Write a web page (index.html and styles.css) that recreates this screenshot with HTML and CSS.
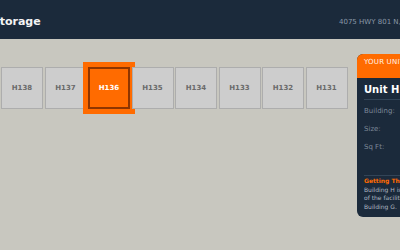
FILE: index.html
```html
<!DOCTYPE html>
<html lang="en">

<head>
    <meta charset="UTF-8">
    <meta name="viewport" content="width=device-width, initial-scale=1.0">
    <title>Self Storage - Unit Map</title>
    <link rel="stylesheet" href="styles.css">
</head>

<body>
    <div class="page">
        <!-- Header -->
        <header class="site-header">
            <h1 class="brand">Self Storage</h1>
            <div class="address">4075 HWY 801 N, Advance, NC 27006</div>
        </header>

        <main class="map">
            <!-- Unit strip -->
            <div class="units">
                <div class="unit">H139</div>
                <div class="unit">H138</div>
                <div class="unit">H137</div>
                <div class="unit selected">H136</div>
                <div class="unit">H135</div>
                <div class="unit">H134</div>
                <div class="unit">H133</div>
                <div class="unit">H132</div>
                <div class="unit">H131</div>
            </div>

            <!-- Unit info panel -->
            <aside class="panel">
                <div class="panel-head">YOUR UNIT</div>
                <div class="panel-body">
                    <h2 class="unit-name">Unit H136</h2>
                    <div class="info-row"><span class="label">Building:</span><span class="value">H</span></div>
                    <div class="info-row"><span class="label">Size:</span><span class="value">10 x 10</span></div>
                    <div class="info-row"><span class="label">Sq Ft:</span><span class="value">100</span></div>
                    <div class="directions">
                        <h3>Getting There</h3>
                        <p>Building H is at the back<br>of the facility, behind<br>Building G.</p>
                    </div>
                </div>
            </aside>
        </main>
    </div>
</body>

</html>
```

FILE: styles.css
```css
html,
body {
    overflow: hidden;
}

body {
    margin: 0;
    font-family: "DejaVu Sans", sans-serif;
    background-color: #c8c7bf;
}

.page {
    width: 620px;
    margin-left: -50px;
}

.site-header {
    display: flex;
    align-items: center;
    height: 39px;
    box-sizing: border-box;
    padding: 4px 16px 0 14px;
    background-color: #1b2a3b;
}

.brand {
    flex: 1;
    margin: 0;
    font-size: 11px;
    font-weight: bold;
    color: #f4f4f4;
}

.address {
    width: 215px;
    font-size: 7px;
    color: #8a98a8;
}

.map {
    display: flex;
    align-items: flex-start;
    padding-top: 15px;
}

.units {
    display: flex;
    gap: 1.5px;
    margin-top: 13px;
    padding-left: 7.5px;
}

.unit {
    width: 42px;
    height: 42px;
    box-sizing: border-box;
    display: flex;
    justify-content: center;
    align-items: center;
    border: 1px solid #adadad;
    background-color: #cdcdcd;
    font-size: 7px;
    font-weight: bold;
    color: #6a6a6a;
}

.unit.selected {
    border: 2px solid #8e3500;
    background-color: #ff6b00;
    outline: 5px solid #ff6b00;
    color: #fff;
}

.panel {
    width: 190px;
    margin-left: 9.5px;
    border-radius: 6px;
    overflow: hidden;
    background-color: #1b2a3b;
}

.panel-head {
    padding: 4px 7px 12px;
    background-color: #ff6b00;
    font-size: 7px;
    letter-spacing: 0.2px;
    color: #fff3e8;
}

.panel-body {
    padding: 5px 7px 5px;
}

.unit-name {
    margin: 0 0 2px;
    padding-bottom: 3px;
    border-bottom: 1px solid #324457;
    font-size: 10px;
    line-height: 13px;
    color: #fff;
}

.info-row {
    display: flex;
    justify-content: space-between;
    height: 18px;
    align-items: center;
    font-size: 7px;
}

.label {
    color: #7b8898;
}

.value {
    color: #fff;
    font-weight: bold;
}

.directions {
    margin-top: 19px;
    border-top: 1px solid #324457;
    font-size: 6px;
    line-height: 8.7px;
    padding-top: 1px;
}

.directions h3 {
    margin: 0;
    font-size: 6px;
    color: #ff6b00;
}

.directions p {
    margin: 0;
    color: #aeb7c1;
}
```
